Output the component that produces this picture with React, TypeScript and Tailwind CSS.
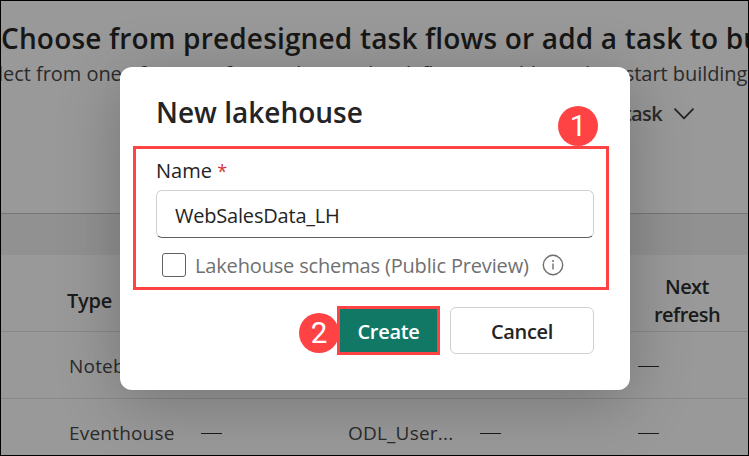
import React from "react";

const Dash = ({ className = "" }: { className?: string }) => (
  <span className={`h-px w-[21px] bg-[#1b1b1b] ${className}`} />
);

const Badge = ({ n, className }: { n: number; className: string }) => (
  <span
    className={`absolute flex h-10 w-10 items-center justify-center rounded-full bg-[#ff4344] pt-px font-['Roboto',sans-serif] text-[29.5px] leading-none font-normal tracking-normal text-white ${className}`}
  >
    {n}
  </span>
);

function Workspace() {
  return (
    <div className="flex h-full flex-col bg-[#999999] text-[#2b2b2b]">
      <section className="flex h-[213px] shrink-0 flex-col border-b border-[#767676]">
        <h1 className="mt-[19px] h-[36px] text-[28px] leading-[36px] font-semibold tracking-[0.17px] whitespace-nowrap text-[#171717]">
          Choose from predesigned task flows or add a task to build
        </h1>
        <p className="mt-[4px] -ml-[25px] h-[28px] text-[20px] leading-[28px] tracking-[-0.05px] whitespace-nowrap">
          Select from one of Microsoft's predesigned task flows or add a task to start building
        </p>
        <div className="mt-[12px] mr-[53px] flex h-7 items-center justify-end gap-[11px] text-[20px] font-semibold tracking-[-0.6px]">
          Add a task
          <svg width="22" height="14" viewBox="0 0 22 14" fill="none" stroke="#242424" strokeWidth="1.8" strokeLinecap="round" strokeLinejoin="round">
            <path d="M2 2.2 11 11.4 20 2.2" />
          </svg>
        </div>
      </section>
      <div className="h-[41px] shrink-0 bg-[#919191]" />
      <div className="flex h-[77px] shrink-0 border-b border-[#898989] text-[20px] font-semibold text-[#1b1b1b]">
        <div className="mt-[32px] ml-[66px] h-7 leading-7 tracking-[-0.2px]">Type</div>
        <div className="mt-[18px] mr-[26px] ml-auto w-[70px] text-center leading-7 tracking-[-0.55px]">Next refresh</div>
      </div>
      <div className="flex h-[67px] shrink-0 items-center border-b border-[#898989] pt-[3px] text-[19px] tracking-[0.2px]">
        <span className="ml-[68px] flex-1">Notebook</span>
        <Dash className="mr-[89px]" />
      </div>
      <div className="flex h-[69px] shrink-0 items-center text-[19px] tracking-[0.2px]">
        <span className="ml-[68px] w-[132px]">Eventhouse</span>
        <Dash />
        <span className="ml-[126px] w-[132px]">ODL_User...</span>
        <Dash />
        <Dash className="mr-[89px] ml-auto" />
      </div>
    </div>
  );
}

function Dialog() {
  return (
    <div className="absolute top-[67px] left-[120px] flex h-[323px] w-[510px] flex-col rounded-[12px] bg-white px-9 text-[#242424] shadow-[0_12px_64px_rgba(0,0,0,0.24)]">
      <h2 className="mt-[27px] h-9 text-[28px] leading-9 font-semibold">New lakehouse</h2>
      <label className="mt-[27px] h-7 text-[20px] leading-7">
        Name <span className="text-[18px] text-[#d13438]">*</span>
      </label>
      <div className="mt-[5px] flex h-12 items-center rounded-[6px] border border-[#d1d1d1] border-b-[#616161] px-[18px] pt-[3px] text-[20px] tracking-[-0.2px]">
        WebSalesData_LH
      </div>
      <div className="mt-[13px] ml-[6px] flex h-7 items-center text-[20px] text-[#707070]">
        <span className="h-6 w-6 rounded-[3px] border border-[#616161]" />
        <span className="mt-[2px] ml-[9px] w-[334px] tracking-[-0.16px] whitespace-nowrap">Lakehouse schemas (Public Preview)</span>
        <svg className="ml-[13px]" width="22" height="22" viewBox="0 0 22 22" fill="none" stroke="#707070" strokeWidth="1.4">
          <circle cx="11" cy="11" r="9.7" />
          <path d="M11 9.5v6" />
          <circle cx="11" cy="7" r="1" fill="#707070" stroke="none" />
        </svg>
      </div>
      <div className="relative mt-[28px] flex h-[49px] justify-end gap-[10px] text-[20px] font-semibold tracking-[-0.3px]">
        <Badge n={2} className="top-[6px] left-[143px]" />
        <div className="relative -mt-px flex h-[49px] w-[103px] items-center justify-center border-[3px] border-[#ff4344] bg-[#117865] pt-[2px] text-white">
          Create
        </div>
        <div className="flex h-[47px] w-[144px] items-center justify-center rounded-[6px] border border-[#d1d1d1] pt-[2px]">
          Cancel
        </div>
      </div>
      <div className="absolute top-[79px] left-[13px] h-[144px] w-[476px] border-[3px] border-[#ff4344]" />
      <Badge n={1} className="top-[39px] left-[438px]" />
    </div>
  );
}

export default function App() {
  return (
    <div className="relative h-[456px] w-[749px] overflow-hidden font-['Open_Sans','Noto_Sans',sans-serif]">
      <div className="h-full overflow-hidden p-px">
        <Workspace />
      </div>
      <Dialog />
      <div className="pointer-events-none absolute inset-0 border border-black" />
    </div>
  );
}
